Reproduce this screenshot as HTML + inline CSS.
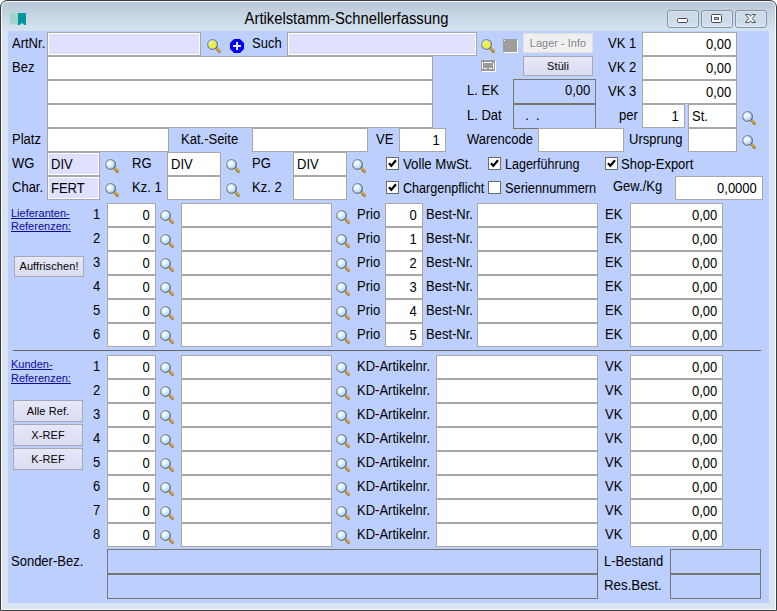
<!DOCTYPE html>
<html lang="de"><head><meta charset="utf-8"><title>Artikelstamm-Schnellerfassung</title>
<style>
html,body{margin:0;padding:0;background:#fff;}
body{width:777px;height:611px;position:relative;overflow:hidden;font-family:"Liberation Sans",Arial,sans-serif;font-size:14px;color:#000;}
#win{position:absolute;left:0;top:0;width:777px;height:611px;box-sizing:border-box;border:1px solid #3c3c3c;border-radius:7px 7px 0 0;
 background:linear-gradient(to bottom,#b7c7d6 0,#c6d5e3 14px,#d8e4f1 31px,#d8e4f1 100%);box-shadow:inset 0 0 0 1px rgba(255,255,255,.85);}
#client{position:absolute;left:8px;top:31px;width:761px;height:572px;background:#bdcffd;}
#title{position:absolute;left:0;top:8px;width:693px;text-align:center;font-size:16px;line-height:22px;color:#000;white-space:nowrap;transform:scaleX(.924);transform-origin:50% 0;}
.l,.f,.b,.ic,.cb,.bt,.lk,.cp{position:absolute;box-sizing:border-box;white-space:nowrap;}
.l{height:24px;line-height:22px;transform:scaleX(.929);transform-origin:0 0;}
.f span,.b span{display:inline-block;transform:scaleX(.929);transform-origin:0 0;}
.f.r span,.b.r span{transform-origin:100% 0;}
.f{border:1px solid #a8a8a8;background:#fff;line-height:22px;padding:0 4px 0 3px;overflow:hidden;}
.f.r,.b.r{text-align:right;padding:0 5px 0 0;}
.f.lv{background:#dfe0fd;box-shadow:inset 0 0 0 1px #fff;}
.b{border:1px solid #777570;background:#bdcffd;line-height:20px;padding:0 4px;overflow:hidden;}
.cb{width:13px;height:13px;border:1px solid #6a6a6a;background:#fff;}
.cb svg{position:absolute;left:0;top:0;}
.bt{border:1px solid #a9a9ad;background:linear-gradient(to bottom,#e6e7f8,#dadcf1);font-size:11px;text-align:center;letter-spacing:.1px;}
.bt.dis{background:#efefef;border-color:#e2e2e6;color:#808080;text-shadow:1px 1px 0 #fff;letter-spacing:0;}
.lk{font-size:11px;line-height:13px;color:#0b0b9c;text-decoration:underline;}
.cp{top:10px;width:32px;height:18px;border:1px solid #8693a8;border-radius:3px;background:linear-gradient(to bottom,rgba(255,255,255,.16) 0,rgba(255,255,255,.10) 48%,rgba(255,255,255,0) 52%,rgba(255,255,255,.06) 100%);box-shadow:inset 0 0 0 1px rgba(255,255,255,.28);}
.cp svg{position:absolute;left:-1px;top:-1px;}
</style></head><body>
<svg width="0" height="0" style="position:absolute"><defs>
<radialGradient id="gb" cx="0.36" cy="0.32" r="0.75"><stop offset="0" stop-color="#ffffff"/><stop offset="0.35" stop-color="#eaf5fb"/><stop offset="1" stop-color="#9ccbe6"/></radialGradient>
<radialGradient id="gy" cx="0.3" cy="0.25" r="0.45"><stop offset="0" stop-color="#f8f4c0"/><stop offset="1" stop-color="#e9f03a"/></radialGradient>
<linearGradient id="gr" x1="0" y1="0" x2="1" y2="1"><stop offset="0" stop-color="#93a4b9"/><stop offset="1" stop-color="#4d6480"/></linearGradient>
<g id="hd"><path d="M10.4 10.2L13.5 13.5" stroke="#8a5e10" stroke-width="2.6" stroke-linecap="round"/><path d="M10.6 10.1L13.6 13.3" stroke="#e9b62e" stroke-width="1.5" stroke-linecap="round"/></g>
<g id="mb"><use href="#hd"/><circle cx="6.5" cy="6.4" r="5.6" fill="none" stroke="#fff" stroke-opacity=".45" stroke-width="1"/><circle cx="6.5" cy="6.4" r="4.9" fill="url(#gb)" stroke="url(#gr)" stroke-width="1.35"/></g>
<g id="my"><use href="#hd"/><circle cx="6.5" cy="6.4" r="5.6" fill="none" stroke="#fff" stroke-opacity=".45" stroke-width="1"/><circle cx="6.5" cy="6.4" r="4.9" fill="#dfe6d0" stroke="url(#gr)" stroke-width="1.35"/><circle cx="6.6" cy="6.5" r="3.8" fill="#e8ef3c"/><path d="M2.9 7.4A3.8 3.8 0 0 1 7.6 2.9L2.9 7.4z" fill="#efeeb6"/></g>
</defs></svg>
<div id="win">
</div>
<svg class="ic" style="left:10px;top:13px" width="16" height="12" viewBox="0 0 16 12"><path d="M0 0h8v12h-1.5l-2.5-2l-2.5 2h-1.5z" fill="#9fd4cf"/><path d="M8 0h8v12h-1.5l-2.5-2l-2.5 2h-1.5z" fill="#00969a"/></svg>
<div id="title">Artikelstamm-Schnellerfassung</div>
<div class="cp" style="left:667px"><svg width="32" height="18" viewBox="0 0 32 18"><rect x="10.5" y="8.5" width="10" height="4" rx="1.2" fill="#fff" stroke="#454a55"/></svg></div>
<div class="cp" style="left:701px"><svg width="32" height="18" viewBox="0 0 32 18"><rect x="10.5" y="4.5" width="10" height="8" rx="1.2" fill="#fff" stroke="#454a55"/><rect x="13.5" y="7.5" width="4" height="2" fill="#a9b8cc" stroke="#5a6272"/></svg></div>
<div class="cp" style="left:735px"><svg width="32" height="18" viewBox="0 0 32 18"><path d="M10.5 4.5h3.6l1.4 1.7l1.4-1.7h3.6l-3.2 4l3.2 4h-3.6l-1.4-1.7l-1.4 1.7h-3.6l3.2-4z" fill="#f4f4f4" stroke="#50555f" stroke-width="1" stroke-linejoin="round"/></svg></div>
<div id="client"></div>
<div class="l" style="left:12px;top:32px">ArtNr.</div>
<div class="f lv" style="left:47px;top:32px;width:154px;height:24px"><span></span></div>
<svg class="ic" style="left:206px;top:38px" width="16" height="16" viewBox="0 0 16 16"><use href="#my"/></svg>
<svg class="ic" style="left:229px;top:38px" width="16" height="16" viewBox="0 0 16 16"><path d="M5 1h6l4 4v6l-4 4h-6l-4-4v-6z" fill="#0000ff"/><path d="M4 7h8v2h-8z M7 4h2v8h-2z" fill="#e4ecff"/></svg>
<div class="l" style="left:252px;top:32px">Such</div>
<div class="f lv" style="left:287px;top:32px;width:190px;height:24px"><span></span></div>
<svg class="ic" style="left:480px;top:38px" width="16" height="16" viewBox="0 0 16 16"><use href="#my"/></svg>
<div class="ic" style="left:503px;top:39px;width:14px;height:13px;background:#9e9e9e;box-shadow:1px 1px 0 #fff"></div>
<div class="ic" style="left:504px;top:40px;width:1px;height:1px;background:#fff"></div>
<svg class="ic" style="left:481px;top:60px" width="15" height="12" viewBox="0 0 15 12"><path d="M1 1h14v11h-14z" fill="#fff"/><path d="M0 0h14v11h-14z" fill="#9a9a9a"/><path d="M1 2h1v7h-1z M3 2h8v1h-8z M12 3h1v6h-1z M3 8h3v1h-3z M8 8h3v1h-3z" fill="#fff"/></svg>
<div class="bt dis" style="left:523px;top:33px;width:70px;height:20px;line-height:18px">Lager - Info</div>
<div class="bt" style="left:523px;top:56px;width:70px;height:20px;line-height:18px">Stüli</div>
<div class="l" style="left:608px;top:32px">VK 1</div>
<div class="f r" style="left:642px;top:32px;width:95px;height:24px"><span>0,00</span></div>
<div class="l" style="left:12px;top:56px">Bez</div>
<div class="f" style="left:47px;top:56px;width:386px;height:24px"><span></span></div>
<div class="f" style="left:47px;top:80px;width:386px;height:24px"><span></span></div>
<div class="f" style="left:47px;top:104px;width:386px;height:24px"><span></span></div>
<div class="l" style="left:608px;top:56px">VK 2</div>
<div class="f r" style="left:642px;top:56px;width:95px;height:24px"><span>0,00</span></div>
<div class="l" style="left:608px;top:80px">VK 3</div>
<div class="f r" style="left:642px;top:80px;width:95px;height:24px"><span>0,00</span></div>
<div class="l" style="left:467px;top:79px">L. EK</div>
<div class="b r" style="left:513px;top:79px;width:83px;height:25px"><span>0,00</span></div>
<div class="l" style="left:467px;top:104px">L. Dat</div>
<div class="b" style="left:513px;top:104px;width:83px;height:25px"><span>&nbsp;&nbsp;.&nbsp;&nbsp;.</span></div>
<div class="l" style="left:619px;top:104px">per</div>
<div class="f r" style="left:642px;top:104px;width:43px;height:24px"><span>1</span></div>
<div class="f" style="left:688px;top:104px;width:49px;height:24px"><span>St.</span></div>
<svg class="ic" style="left:741px;top:110px" width="16" height="16" viewBox="0 0 16 16"><use href="#mb"/></svg>
<div class="l" style="left:12px;top:128px">Platz</div>
<div class="f" style="left:47px;top:128px;width:122px;height:24px"><span></span></div>
<div class="l" style="left:181px;top:128px">Kat.-Seite</div>
<div class="f" style="left:252px;top:128px;width:116px;height:24px"><span></span></div>
<div class="l" style="left:376px;top:128px">VE</div>
<div class="f r" style="left:399px;top:128px;width:47px;height:24px"><span>1</span></div>
<div class="l" style="left:467px;top:128px">Warencode</div>
<div class="f" style="left:538px;top:128px;width:86px;height:24px"><span></span></div>
<div class="l" style="left:629px;top:128px">Ursprung</div>
<div class="f" style="left:688px;top:128px;width:49px;height:24px"><span></span></div>
<svg class="ic" style="left:741px;top:134px" width="16" height="16" viewBox="0 0 16 16"><use href="#mb"/></svg>
<div class="l" style="left:12px;top:152px">WG</div>
<div class="f lv" style="left:47px;top:152px;width:53px;height:24px"><span>DIV</span></div>
<svg class="ic" style="left:104px;top:158px" width="16" height="16" viewBox="0 0 16 16"><use href="#mb"/></svg>
<div class="l" style="left:132px;top:152px">RG</div>
<div class="f" style="left:167px;top:152px;width:54px;height:24px"><span>DIV</span></div>
<svg class="ic" style="left:225px;top:158px" width="16" height="16" viewBox="0 0 16 16"><use href="#mb"/></svg>
<div class="l" style="left:252px;top:152px">PG</div>
<div class="f" style="left:293px;top:152px;width:54px;height:24px"><span>DIV</span></div>
<svg class="ic" style="left:351px;top:158px" width="16" height="16" viewBox="0 0 16 16"><use href="#mb"/></svg>
<div class="cb" style="left:386px;top:157px"><svg width="11" height="11" viewBox="0 0 11 11"><path d="M2 5.2 L4.3 7.8 L9 2.2" fill="none" stroke="#000" stroke-width="2.1"/></svg></div>
<div class="l" style="left:403px;top:153px;transform:scaleX(0.945)">Volle MwSt.</div>
<div class="cb" style="left:488px;top:157px"><svg width="11" height="11" viewBox="0 0 11 11"><path d="M2 5.2 L4.3 7.8 L9 2.2" fill="none" stroke="#000" stroke-width="2.1"/></svg></div>
<div class="l" style="left:505px;top:153px;transform:scaleX(0.895)">Lagerführung</div>
<div class="cb" style="left:605px;top:157px"><svg width="11" height="11" viewBox="0 0 11 11"><path d="M2 5.2 L4.3 7.8 L9 2.2" fill="none" stroke="#000" stroke-width="2.1"/></svg></div>
<div class="l" style="left:621px;top:153px">Shop-Export</div>
<div class="l" style="left:12px;top:176px">Char.</div>
<div class="f lv" style="left:47px;top:176px;width:53px;height:24px"><span>FERT</span></div>
<svg class="ic" style="left:104px;top:182px" width="16" height="16" viewBox="0 0 16 16"><use href="#mb"/></svg>
<div class="l" style="left:132px;top:176px">Kz. 1</div>
<div class="f" style="left:167px;top:176px;width:54px;height:24px"><span></span></div>
<svg class="ic" style="left:225px;top:182px" width="16" height="16" viewBox="0 0 16 16"><use href="#mb"/></svg>
<div class="l" style="left:252px;top:176px">Kz. 2</div>
<div class="f" style="left:293px;top:176px;width:54px;height:24px"><span></span></div>
<svg class="ic" style="left:351px;top:182px" width="16" height="16" viewBox="0 0 16 16"><use href="#mb"/></svg>
<div class="cb" style="left:386px;top:181px"><svg width="11" height="11" viewBox="0 0 11 11"><path d="M2 5.2 L4.3 7.8 L9 2.2" fill="none" stroke="#000" stroke-width="2.1"/></svg></div>
<div class="l" style="left:403px;top:177px;transform:scaleX(0.9)">Chargenpflicht</div>
<div class="cb" style="left:488px;top:181px"></div>
<div class="l" style="left:505px;top:177px;transform:scaleX(0.916)">Seriennummern</div>
<div class="l" style="left:613px;top:175px">Gew./Kg</div>
<div class="f r" style="left:675px;top:176px;width:88px;height:24px"><span>0,0000</span></div>
<div class="lk" style="left:11px;top:207px">Lieferanten-<br>Referenzen:</div>
<div class="bt" style="left:14px;top:256px;width:70px;height:21px;line-height:19px">Auffrischen!</div>
<div class="l" style="left:93px;top:203px">1</div>
<div class="f r" style="left:107px;top:203px;width:49px;height:24px"><span>0</span></div>
<svg class="ic" style="left:159px;top:209px" width="16" height="16" viewBox="0 0 16 16"><use href="#mb"/></svg>
<div class="f" style="left:181px;top:203px;width:151px;height:24px"><span></span></div>
<svg class="ic" style="left:335px;top:209px" width="16" height="16" viewBox="0 0 16 16"><use href="#mb"/></svg>
<div class="l" style="left:357px;top:203px">Prio</div>
<div class="f r" style="left:385px;top:203px;width:38px;height:24px"><span>0</span></div>
<div class="l" style="left:426px;top:203px">Best-Nr.</div>
<div class="f" style="left:477px;top:203px;width:121px;height:24px"><span></span></div>
<div class="l" style="left:605px;top:203px">EK</div>
<div class="f r" style="left:630px;top:203px;width:93px;height:24px"><span>0,00</span></div>
<div class="l" style="left:93px;top:227px">2</div>
<div class="f r" style="left:107px;top:227px;width:49px;height:24px"><span>0</span></div>
<svg class="ic" style="left:159px;top:233px" width="16" height="16" viewBox="0 0 16 16"><use href="#mb"/></svg>
<div class="f" style="left:181px;top:227px;width:151px;height:24px"><span></span></div>
<svg class="ic" style="left:335px;top:233px" width="16" height="16" viewBox="0 0 16 16"><use href="#mb"/></svg>
<div class="l" style="left:357px;top:227px">Prio</div>
<div class="f r" style="left:385px;top:227px;width:38px;height:24px"><span>1</span></div>
<div class="l" style="left:426px;top:227px">Best-Nr.</div>
<div class="f" style="left:477px;top:227px;width:121px;height:24px"><span></span></div>
<div class="l" style="left:605px;top:227px">EK</div>
<div class="f r" style="left:630px;top:227px;width:93px;height:24px"><span>0,00</span></div>
<div class="l" style="left:93px;top:251px">3</div>
<div class="f r" style="left:107px;top:251px;width:49px;height:24px"><span>0</span></div>
<svg class="ic" style="left:159px;top:257px" width="16" height="16" viewBox="0 0 16 16"><use href="#mb"/></svg>
<div class="f" style="left:181px;top:251px;width:151px;height:24px"><span></span></div>
<svg class="ic" style="left:335px;top:257px" width="16" height="16" viewBox="0 0 16 16"><use href="#mb"/></svg>
<div class="l" style="left:357px;top:251px">Prio</div>
<div class="f r" style="left:385px;top:251px;width:38px;height:24px"><span>2</span></div>
<div class="l" style="left:426px;top:251px">Best-Nr.</div>
<div class="f" style="left:477px;top:251px;width:121px;height:24px"><span></span></div>
<div class="l" style="left:605px;top:251px">EK</div>
<div class="f r" style="left:630px;top:251px;width:93px;height:24px"><span>0,00</span></div>
<div class="l" style="left:93px;top:275px">4</div>
<div class="f r" style="left:107px;top:275px;width:49px;height:24px"><span>0</span></div>
<svg class="ic" style="left:159px;top:281px" width="16" height="16" viewBox="0 0 16 16"><use href="#mb"/></svg>
<div class="f" style="left:181px;top:275px;width:151px;height:24px"><span></span></div>
<svg class="ic" style="left:335px;top:281px" width="16" height="16" viewBox="0 0 16 16"><use href="#mb"/></svg>
<div class="l" style="left:357px;top:275px">Prio</div>
<div class="f r" style="left:385px;top:275px;width:38px;height:24px"><span>3</span></div>
<div class="l" style="left:426px;top:275px">Best-Nr.</div>
<div class="f" style="left:477px;top:275px;width:121px;height:24px"><span></span></div>
<div class="l" style="left:605px;top:275px">EK</div>
<div class="f r" style="left:630px;top:275px;width:93px;height:24px"><span>0,00</span></div>
<div class="l" style="left:93px;top:299px">5</div>
<div class="f r" style="left:107px;top:299px;width:49px;height:24px"><span>0</span></div>
<svg class="ic" style="left:159px;top:305px" width="16" height="16" viewBox="0 0 16 16"><use href="#mb"/></svg>
<div class="f" style="left:181px;top:299px;width:151px;height:24px"><span></span></div>
<svg class="ic" style="left:335px;top:305px" width="16" height="16" viewBox="0 0 16 16"><use href="#mb"/></svg>
<div class="l" style="left:357px;top:299px">Prio</div>
<div class="f r" style="left:385px;top:299px;width:38px;height:24px"><span>4</span></div>
<div class="l" style="left:426px;top:299px">Best-Nr.</div>
<div class="f" style="left:477px;top:299px;width:121px;height:24px"><span></span></div>
<div class="l" style="left:605px;top:299px">EK</div>
<div class="f r" style="left:630px;top:299px;width:93px;height:24px"><span>0,00</span></div>
<div class="l" style="left:93px;top:323px">6</div>
<div class="f r" style="left:107px;top:323px;width:49px;height:24px"><span>0</span></div>
<svg class="ic" style="left:159px;top:329px" width="16" height="16" viewBox="0 0 16 16"><use href="#mb"/></svg>
<div class="f" style="left:181px;top:323px;width:151px;height:24px"><span></span></div>
<svg class="ic" style="left:335px;top:329px" width="16" height="16" viewBox="0 0 16 16"><use href="#mb"/></svg>
<div class="l" style="left:357px;top:323px">Prio</div>
<div class="f r" style="left:385px;top:323px;width:38px;height:24px"><span>5</span></div>
<div class="l" style="left:426px;top:323px">Best-Nr.</div>
<div class="f" style="left:477px;top:323px;width:121px;height:24px"><span></span></div>
<div class="l" style="left:605px;top:323px">EK</div>
<div class="f r" style="left:630px;top:323px;width:93px;height:24px"><span>0,00</span></div>
<div class="ic" style="left:13px;top:350px;width:748px;height:1px;background:#666"></div>
<div class="lk" style="left:11px;top:356.5px;line-height:14px">Kunden-<br>Referenzen:</div>
<div class="bt" style="left:13px;top:400px;width:70px;height:22px;line-height:20px">Alle Ref.</div>
<div class="bt" style="left:13px;top:424px;width:70px;height:22px;line-height:20px">X-REF</div>
<div class="bt" style="left:13px;top:448px;width:70px;height:22px;line-height:20px">K-REF</div>
<div class="l" style="left:93px;top:355px">1</div>
<div class="f r" style="left:107px;top:355px;width:49px;height:24px"><span>0</span></div>
<svg class="ic" style="left:159px;top:361px" width="16" height="16" viewBox="0 0 16 16"><use href="#mb"/></svg>
<div class="f" style="left:181px;top:355px;width:151px;height:24px"><span></span></div>
<svg class="ic" style="left:335px;top:361px" width="16" height="16" viewBox="0 0 16 16"><use href="#mb"/></svg>
<div class="l" style="left:357px;top:355px">KD-Artikelnr.</div>
<div class="f" style="left:436px;top:355px;width:162px;height:24px"><span></span></div>
<div class="l" style="left:605px;top:355px">VK</div>
<div class="f r" style="left:630px;top:355px;width:93px;height:24px"><span>0,00</span></div>
<div class="l" style="left:93px;top:379px">2</div>
<div class="f r" style="left:107px;top:379px;width:49px;height:24px"><span>0</span></div>
<svg class="ic" style="left:159px;top:385px" width="16" height="16" viewBox="0 0 16 16"><use href="#mb"/></svg>
<div class="f" style="left:181px;top:379px;width:151px;height:24px"><span></span></div>
<svg class="ic" style="left:335px;top:385px" width="16" height="16" viewBox="0 0 16 16"><use href="#mb"/></svg>
<div class="l" style="left:357px;top:379px">KD-Artikelnr.</div>
<div class="f" style="left:436px;top:379px;width:162px;height:24px"><span></span></div>
<div class="l" style="left:605px;top:379px">VK</div>
<div class="f r" style="left:630px;top:379px;width:93px;height:24px"><span>0,00</span></div>
<div class="l" style="left:93px;top:403px">3</div>
<div class="f r" style="left:107px;top:403px;width:49px;height:24px"><span>0</span></div>
<svg class="ic" style="left:159px;top:409px" width="16" height="16" viewBox="0 0 16 16"><use href="#mb"/></svg>
<div class="f" style="left:181px;top:403px;width:151px;height:24px"><span></span></div>
<svg class="ic" style="left:335px;top:409px" width="16" height="16" viewBox="0 0 16 16"><use href="#mb"/></svg>
<div class="l" style="left:357px;top:403px">KD-Artikelnr.</div>
<div class="f" style="left:436px;top:403px;width:162px;height:24px"><span></span></div>
<div class="l" style="left:605px;top:403px">VK</div>
<div class="f r" style="left:630px;top:403px;width:93px;height:24px"><span>0,00</span></div>
<div class="l" style="left:93px;top:427px">4</div>
<div class="f r" style="left:107px;top:427px;width:49px;height:24px"><span>0</span></div>
<svg class="ic" style="left:159px;top:433px" width="16" height="16" viewBox="0 0 16 16"><use href="#mb"/></svg>
<div class="f" style="left:181px;top:427px;width:151px;height:24px"><span></span></div>
<svg class="ic" style="left:335px;top:433px" width="16" height="16" viewBox="0 0 16 16"><use href="#mb"/></svg>
<div class="l" style="left:357px;top:427px">KD-Artikelnr.</div>
<div class="f" style="left:436px;top:427px;width:162px;height:24px"><span></span></div>
<div class="l" style="left:605px;top:427px">VK</div>
<div class="f r" style="left:630px;top:427px;width:93px;height:24px"><span>0,00</span></div>
<div class="l" style="left:93px;top:451px">5</div>
<div class="f r" style="left:107px;top:451px;width:49px;height:24px"><span>0</span></div>
<svg class="ic" style="left:159px;top:457px" width="16" height="16" viewBox="0 0 16 16"><use href="#mb"/></svg>
<div class="f" style="left:181px;top:451px;width:151px;height:24px"><span></span></div>
<svg class="ic" style="left:335px;top:457px" width="16" height="16" viewBox="0 0 16 16"><use href="#mb"/></svg>
<div class="l" style="left:357px;top:451px">KD-Artikelnr.</div>
<div class="f" style="left:436px;top:451px;width:162px;height:24px"><span></span></div>
<div class="l" style="left:605px;top:451px">VK</div>
<div class="f r" style="left:630px;top:451px;width:93px;height:24px"><span>0,00</span></div>
<div class="l" style="left:93px;top:475px">6</div>
<div class="f r" style="left:107px;top:475px;width:49px;height:24px"><span>0</span></div>
<svg class="ic" style="left:159px;top:481px" width="16" height="16" viewBox="0 0 16 16"><use href="#mb"/></svg>
<div class="f" style="left:181px;top:475px;width:151px;height:24px"><span></span></div>
<svg class="ic" style="left:335px;top:481px" width="16" height="16" viewBox="0 0 16 16"><use href="#mb"/></svg>
<div class="l" style="left:357px;top:475px">KD-Artikelnr.</div>
<div class="f" style="left:436px;top:475px;width:162px;height:24px"><span></span></div>
<div class="l" style="left:605px;top:475px">VK</div>
<div class="f r" style="left:630px;top:475px;width:93px;height:24px"><span>0,00</span></div>
<div class="l" style="left:93px;top:499px">7</div>
<div class="f r" style="left:107px;top:499px;width:49px;height:24px"><span>0</span></div>
<svg class="ic" style="left:159px;top:505px" width="16" height="16" viewBox="0 0 16 16"><use href="#mb"/></svg>
<div class="f" style="left:181px;top:499px;width:151px;height:24px"><span></span></div>
<svg class="ic" style="left:335px;top:505px" width="16" height="16" viewBox="0 0 16 16"><use href="#mb"/></svg>
<div class="l" style="left:357px;top:499px">KD-Artikelnr.</div>
<div class="f" style="left:436px;top:499px;width:162px;height:24px"><span></span></div>
<div class="l" style="left:605px;top:499px">VK</div>
<div class="f r" style="left:630px;top:499px;width:93px;height:24px"><span>0,00</span></div>
<div class="l" style="left:93px;top:523px">8</div>
<div class="f r" style="left:107px;top:523px;width:49px;height:24px"><span>0</span></div>
<svg class="ic" style="left:159px;top:529px" width="16" height="16" viewBox="0 0 16 16"><use href="#mb"/></svg>
<div class="f" style="left:181px;top:523px;width:151px;height:24px"><span></span></div>
<svg class="ic" style="left:335px;top:529px" width="16" height="16" viewBox="0 0 16 16"><use href="#mb"/></svg>
<div class="l" style="left:357px;top:523px">KD-Artikelnr.</div>
<div class="f" style="left:436px;top:523px;width:162px;height:24px"><span></span></div>
<div class="l" style="left:605px;top:523px">VK</div>
<div class="f r" style="left:630px;top:523px;width:93px;height:24px"><span>0,00</span></div>
<div class="l" style="left:11px;top:549.5px">Sonder-Bez.</div>
<div class="b" style="left:107px;top:549px;width:491px;height:25px"><span></span></div>
<div class="b" style="left:107px;top:574px;width:491px;height:25px"><span></span></div>
<div class="l" style="left:604px;top:549.5px">L-Bestand</div>
<div class="b" style="left:670px;top:549px;width:91px;height:25px"><span></span></div>
<div class="l" style="left:604px;top:574.3px;transform:scaleX(0.95)">Res.Best.</div>
<div class="b" style="left:670px;top:574px;width:91px;height:25px"><span></span></div>
</body></html>
